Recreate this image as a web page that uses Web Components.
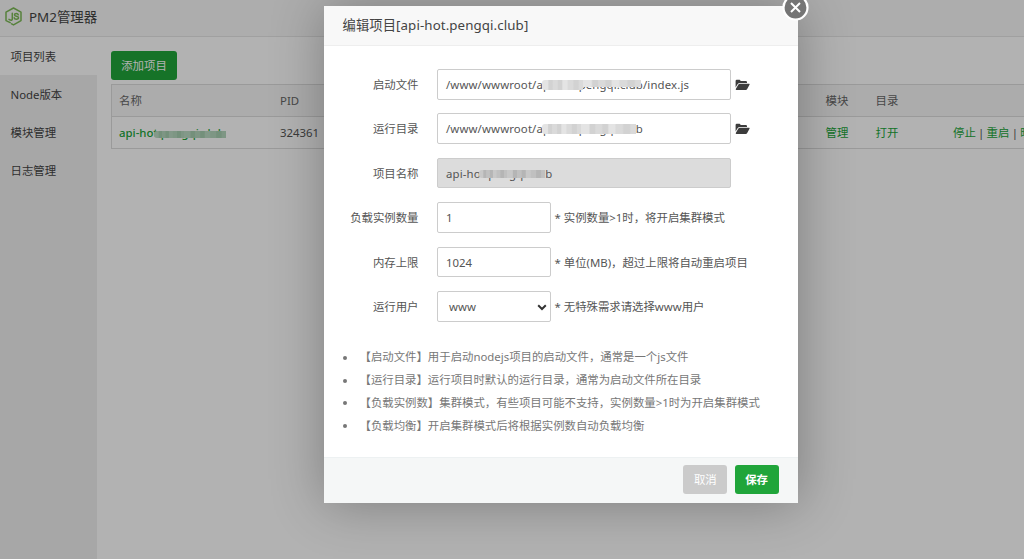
<!DOCTYPE html>
<html lang="zh-CN">
<head>
<meta charset="utf-8">
<title>PM2管理器</title>
<style>
  html, body { margin: 0; height: 100%; overflow: hidden; }
  body {
    font: 11.4px/16px "Noto Sans", "Noto Sans CJK SC", sans-serif;
    color: #555; background: #fff;
  }
</style>
</head>
<body>
<pm-app></pm-app>

<script>
const define = (name, html) => {
  const tpl = document.createElement('template');
  tpl.innerHTML = html;
  customElements.define(name, class extends HTMLElement {
    constructor() {
      super();
      this.attachShadow({ mode: 'open' }).appendChild(tpl.content.cloneNode(true));
    }
  });
};

//-----------------------------------------------
// small parts
//-----------------------------------------------
define('pm-button', `
  <style>
    :host {
      display: flex; align-items: center; justify-content: center;
      box-sizing: border-box; height: 28.5px; min-width: 43.8px;
      padding: 1px 9px 0; border-radius: 3px;
      background: #20a53a; color: #fff; cursor: pointer; white-space: nowrap;
    }
    :host([plain]) { background: #cbcbcb; }
    :host([strong]) { font-weight: bold; }
  </style>
  <slot></slot>
`);

// text with a pixelated strip over part of it;
// the second half of the strip can be shorter (--h2)
define('masked-text', `
  <style>
    :host { display: inline-block; position: relative; white-space: nowrap; }
    .strip {
      position: absolute; left: var(--from); width: var(--size); top: var(--top, 3px);
      display: flex; align-items: flex-start;
    }
    i {
      height: var(--h, 10px);
      background: linear-gradient(90deg, var(--a) 0 14%, var(--b) 17% 25%, var(--c) 27% 37%, var(--b) 40% 48%,
        var(--a) 51% 61%, var(--c) 64% 75%, var(--b) 78% 88%, var(--c) 91%);
    }
    i:first-child { flex: 42; border-radius: 3px 0 0 3px; }
    i:last-child { flex: 58; height: var(--h2, var(--h, 10px)); }
  </style>
  <slot></slot><div class="strip"><i></i><i></i></div>
`);

define('folder-icon', `
  <style>
    :host { display: block; width: 15px; height: 12px; }
    svg { display: block; }
  </style>
  <svg width="15" height="12" viewBox="0 0 15 12" fill="#3c3c3c">
    <path d="M.6 8.6V1.9Q.6.7 1.8.7H4.4Q5.5.7 5.5 1.9H10.8Q12 1.9 12 3V3.9H4.9Q3.5 3.9 2.7 5Z"/>
    <path d="M3.4 5.6Q3.9 4.8 4.9 4.8H14.1Q15 4.8 14.5 5.7L12.2 10Q11.7 10.9 10.7 10.9H1.3Q.4 10.9.8 10.1Z"/>
  </svg>
`);

//-----------------------------------------------
// background page
//-----------------------------------------------
define('pm-topbar', `
  <style>
    :host {
      display: flex; align-items: center; gap: 7px; box-sizing: border-box;
      height: 37px; padding: 0 0 3px 5px;
      background: #f8f8f8; border-bottom: 1px solid #e6e6e6;
      font-size: 13.4px; color: #444;
    }
  </style>
  <svg width="17" height="19" viewBox="0 0 17 19" fill="none" stroke="#7cb955" stroke-width="1.5" stroke-linejoin="round" stroke-linecap="round">
    <path d="M5.2 15.6 1 13.6V5.2L8.5 1 16 5.2V13.6L8.5 17.9 6.6 16.9"/>
    <path d="M7.3 6.2V11.9Q7.3 13.5 5.4 13.1L4 12.3"/>
    <path d="M13.3 7.8Q13 6.5 11.3 6.5 9.5 6.5 9.5 7.8 9.5 9 11.4 9.2 13.5 9.4 13.5 10.8 13.5 12.2 11.4 12.2 9.4 12.2 9.2 10.8"/>
  </svg>
  <slot></slot>
`);

define('pm-sidebar', `
  <style>
    :host { display: block; flex: 0 0 97px; background: #f0f0f0; color: #444; }
    ::slotted(div) { height: 38px; line-height: 39px; padding-left: 10.5px; }
    ::slotted(.on) { background: #fff; }
  </style>
  <slot></slot>
`);

define('project-table', `
  <style>
    :host { display: block; width: 970px; border: 1px solid #ddd; box-sizing: border-box; }
    .row {
      display: grid; grid-template-columns: 161px 545.5px 50px 77.5px 1fr;
      align-items: center; height: 31px; padding-left: 7px;
    }
    .head { background: #f6f6f6; border-bottom: 1px solid #ddd; color: #666; }
    .green { color: #20a53a; }
    .name { font-weight: 500; }
    .ops { white-space: nowrap; word-spacing: -.7px; }
    masked-text {
      --from: 35px; --size: 72px; --top: 6px; --h: 7px;
      --a: #bcdcc4; --b: #a6ceb0; --c: #b5d7bd;
    }
  </style>
  <div class="row head"><span>名称</span><span>PID</span><span>模块</span><span>目录</span><span></span></div>
  <div class="row">
    <span class="green name"><masked-text>api-hot.pengqi.club</masked-text></span>
    <span>324361</span>
    <span class="green">管理</span>
    <span class="green">打开</span>
    <span class="ops"><span class="green">停止</span> | <span class="green">重启</span> | <span class="green">映</span></span>
  </div>
`);

//-----------------------------------------------
// dialog
//-----------------------------------------------
define('form-row', `
  <style>
    :host { display: flex; align-items: center; height: 30.5px; color: #555; }
    .label { width: 95px; text-align: right; margin-right: 18.5px; padding-top: 1.5px; }
    .box {
      display: flex; align-items: center; justify-content: space-between;
      box-sizing: border-box; width: 114px; height: 30.5px;
      padding: 1.5px 3px 0 8px; border: 1px solid #ccc; border-radius: 2px; background: #fff;
    }
    :host([wide]) .box { width: 294px; }
    :host([disabled]) .box { background: #dcdcdc; }
    .hint { margin-left: 3.5px; padding-top: 1.5px; white-space: nowrap; }
  </style>
  <div class="label"><slot name="label"></slot></div>
  <div class="box"><slot></slot></div>
  <div class="hint"><slot name="hint"></slot></div>
`);

define('pm-tips', `
  <style>
    :host { display: block; color: #777; line-height: 22.9px; white-space: nowrap; }
    ::slotted(div) { display: flex; align-items: center; gap: 13px; }
    ::slotted(div)::before {
      content: ""; width: 4px; height: 4px; border-radius: 50%; background: #777;
    }
  </style>
  <slot></slot>
`);

define('pm-dialog', `
  <style>
    :host {
      display: flex; flex-direction: column; box-sizing: border-box; position: relative;
      width: 474px; height: 497.5px; background: #fff;
      box-shadow: 1px 1px 50px rgba(0, 0, 0, .3);
    }
    header {
      flex: 0 0 39px; display: flex; align-items: center; padding-left: 19px;
      background: #f8f8f8; border-bottom: 1px solid #eee;
      font-size: 13.3px; letter-spacing: .1px; color: #444;
    }
    main { flex: 1; }
    footer {
      flex: 0 0 46px; display: flex; gap: 7.5px; align-items: center; justify-content: flex-end;
      box-sizing: border-box; padding: 0 19px 2px 0;
      background: #f5f7f7; border-top: 1px solid #edf1f2;
    }
    .close { position: absolute; top: -11.5px; right: -11.5px; }
  </style>
  <header><slot name="title"></slot></header>
  <main><slot></slot></main>
  <footer><slot name="actions"></slot></footer>
  <svg class="close" width="27" height="27" viewBox="0 0 27 27" fill="none" stroke="#fff">
    <circle cx="13.5" cy="13.5" r="12" fill="#757575" stroke-width="2.2"/>
    <path d="M9 9l9 9M18 9l-9 9" stroke-width="2"/>
  </svg>
`);

define('project-form', `
  <style>
    :host { display: block; padding: 23.5px 0 0; }
    .rows { display: flex; flex-direction: column; gap: 13.95px; }
    masked-text {
      letter-spacing: .13px;
      --from: 95.5px; --size: 99px; --top: 3px; --h: 10px;
      --a: #e4e4e4; --b: #d2d2d2; --c: #dadada;
    }
    .file { --h2: 7px; }
    .dir { --size: 94px; }
    form-row[disabled] masked-text { --from: 33px; --size: 66px; --top: 4px; --h: 8px; --a: #c8c8c8; --b: #b5b5b5; --c: #c0c0c0; }
    .select { padding-left: 3px; }
    pm-tips { margin: 24.5px 0 0 19px; }
  </style>
  <div class="rows">
    <form-row wide>
      <span slot="label">启动文件</span>
      <masked-text class="file">/www/wwwroot/api-hot.pengqi.club/index.js</masked-text>
      <folder-icon slot="hint"></folder-icon>
    </form-row>
    <form-row wide>
      <span slot="label">运行目录</span>
      <masked-text class="dir">/www/wwwroot/api-hot.pengqi.club</masked-text>
      <folder-icon slot="hint"></folder-icon>
    </form-row>
    <form-row wide disabled>
      <span slot="label">项目名称</span>
      <masked-text>api-hot.pengqi.club</masked-text>
    </form-row>
    <form-row>
      <span slot="label">负载实例数量</span><span>1</span>
      <span slot="hint">* 实例数量&gt;1时，将开启集群模式</span>
    </form-row>
    <form-row>
      <span slot="label">内存上限</span><span>1024</span>
      <span slot="hint">* 单位(MB)，超过上限将自动重启项目</span>
    </form-row>
    <form-row>
      <span slot="label">运行用户</span><span class="select">www</span>
      <svg width="10" height="7" viewBox="0 0 10 7" fill="none" stroke="#333" stroke-width="2"><path d="M1.2 1.3 5 5 8.8 1.3"/></svg>
      <span slot="hint">* 无特殊需求请选择www用户</span>
    </form-row>
  </div>
  <pm-tips>
    <div>【启动文件】用于启动nodejs项目的启动文件，通常是一个js文件</div>
    <div>【运行目录】运行项目时默认的运行目录，通常为启动文件所在目录</div>
    <div>【负载实例数】集群模式，有些项目可能不支持，实例数量&gt;1时为开启集群模式</div>
    <div>【负载均衡】开启集群模式后将根据实例数自动负载均衡</div>
  </pm-tips>
`);

//-----------------------------------------------
// whole window
//-----------------------------------------------
define('pm-app', `
  <style>
    :host { display: block; height: 100vh; overflow: hidden; position: relative; }
    .page { display: flex; flex-direction: column; height: 100%; }
    .body { display: flex; flex: 1; overflow: hidden; }
    .content { flex: 1; min-width: 0; overflow: hidden; padding: 14px 0 0 14px; }
    .content pm-button { width: 66px; }
    project-table { margin-top: 4.5px; }
    /* dimmed layer that carries the dialog */
    .shade { position: absolute; inset: 0; background: rgba(0, 0, 0, .3); padding: 5.5px 0 0 323.5px; }
  </style>
  <div class="page">
    <pm-topbar>PM2管理器</pm-topbar>
    <div class="body">
      <pm-sidebar>
        <div class="on">项目列表</div>
        <div>Node版本</div>
        <div>模块管理</div>
        <div>日志管理</div>
      </pm-sidebar>
      <div class="content">
        <pm-button>添加项目</pm-button>
        <project-table></project-table>
      </div>
    </div>
  </div>
  <div class="shade">
    <pm-dialog>
      <span slot="title">编辑项目[api-hot.pengqi.club]</span>
      <project-form></project-form>
      <pm-button slot="actions" plain>取消</pm-button>
      <pm-button slot="actions" strong>保存</pm-button>
    </pm-dialog>
  </div>
`);
</script>
</body>
</html>
